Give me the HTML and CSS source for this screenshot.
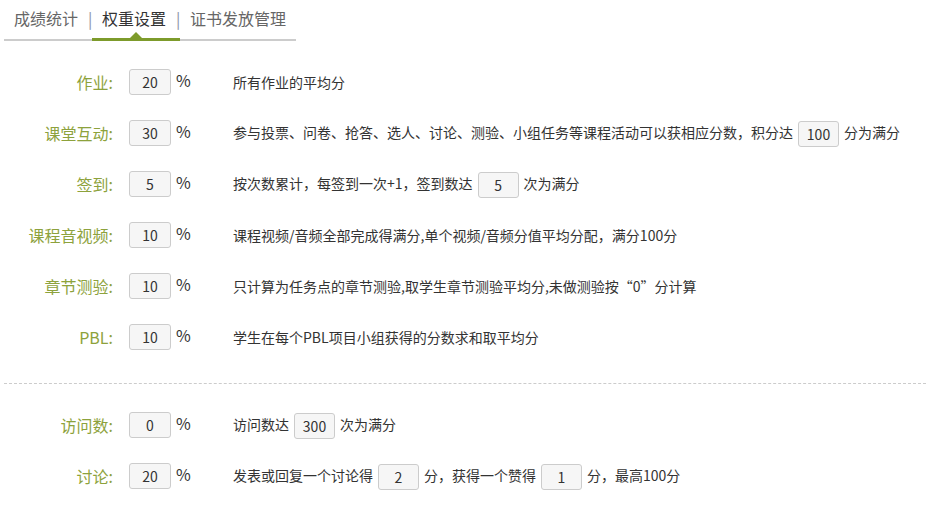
FILE: index.html
```html
<!DOCTYPE html>
<html lang="zh-CN">
<head>
  <meta charset="UTF-8" />
  <title>权重设置</title>
  <link rel="stylesheet" href="styles.css">
</head>
<body>
  <div class="tabs">
    <a class="tab">成绩统计</a>
    <span class="sep">|</span>
    <a class="tab active">权重设置</a>
    <span class="sep">|</span>
    <a class="tab">证书发放管理</a>
  </div>

  <div class="weights">
    <div class="row">
      <label class="name">作业:</label>
      <input class="box" type="text" value="20" />
      <span class="pct">%</span>
      <p class="desc">所有作业的平均分</p>
    </div>
    <div class="row">
      <label class="name">课堂互动:</label>
      <input class="box" type="text" value="30" />
      <span class="pct">%</span>
      <p class="desc">参与投票、问卷、抢答、选人、讨论、测验、小组任务等课程活动可以获相应分数，积分达<input class="box small" type="text" value="100" />分为满分</p>
    </div>
    <div class="row">
      <label class="name">签到:</label>
      <input class="box" type="text" value="5" />
      <span class="pct">%</span>
      <p class="desc">按次数累计，每签到一次+1，签到数达<input class="box small" type="text" value="5" />次为满分</p>
    </div>
    <div class="row">
      <label class="name">课程音视频:</label>
      <input class="box" type="text" value="10" />
      <span class="pct">%</span>
      <p class="desc">课程视频/音频全部完成得满分,单个视频/音频分值平均分配，满分100分</p>
    </div>
    <div class="row">
      <label class="name">章节测验:</label>
      <input class="box" type="text" value="10" />
      <span class="pct">%</span>
      <p class="desc">只计算为任务点的章节测验,取学生章节测验平均分,未做测验按“0”分计算</p>
    </div>
    <div class="row">
      <label class="name">PBL:</label>
      <input class="box" type="text" value="10" />
      <span class="pct">%</span>
      <p class="desc">学生在每个PBL项目小组获得的分数求和取平均分</p>
    </div>
  </div>

  <div class="divider"></div>

  <div class="weights extra">
    <div class="row">
      <label class="name">访问数:</label>
      <input class="box" type="text" value="0" />
      <span class="pct">%</span>
      <p class="desc">访问数达<input class="box small" type="text" value="300" />次为满分</p>
    </div>
    <div class="row">
      <label class="name">讨论:</label>
      <input class="box" type="text" value="20" />
      <span class="pct">%</span>
      <p class="desc">发表或回复一个讨论得<input class="box small" type="text" value="2" />分，获得一个赞得<input class="box small" type="text" value="1" />分，最高100分</p>
    </div>
  </div>
</body>
</html>
```

FILE: styles.css
```css
body {
  margin: 0;
  font-family: "Noto Sans CJK SC", "Noto Sans", sans-serif;
  color: #333;
  background: #fff;
}

.tabs {
  display: flex;
  align-items: flex-start;
  width: 292px;
  height: 39px;
  margin-left: 4px;
  border-bottom: 2px solid #ccc;
  font-size: 16px;
}

.tab {
  position: relative;
  height: 39px;
  padding: 0 10px;
  line-height: 36px;
  color: #666;
  cursor: pointer;
}

.tab.active {
  color: #333;
}

.tab.active::after {
  content: "";
  position: absolute;
  left: 0;
  right: -4px;
  bottom: -2px;
  height: 3px;
  background: #7d9b2b;
}

.tab.active::before {
  content: "";
  position: absolute;
  left: 50%;
  bottom: 1px;
  margin-left: -4px;
  border-left: 6px solid transparent;
  border-right: 6px solid transparent;
  border-bottom: 6px solid #7d9b2b;
}

.sep {
  width: 4px;
  line-height: 36px;
  text-align: center;
  color: #8a93a6;
}

.weights {
  padding-top: 28px;
}

.row {
  display: flex;
  align-items: center;
  height: 26px;
  margin-bottom: 25px;
}

.name {
  width: 113px;
  margin-right: 16px;
  text-align: right;
  font-size: 16px;
  color: #8da23c;
}

.box {
  box-sizing: border-box;
  width: 42px;
  height: 26px;
  border: 1px solid #ccc;
  border-radius: 3px;
  background: #f6f6f6;
  text-align: center;
  font-family: "Noto Sans CJK SC", "Noto Sans", sans-serif;
  font-size: 14px;
  color: #333;
  padding: 0;
}

.box.small {
  width: 41px;
  margin: 0 5px;
  vertical-align: middle;
}

.pct {
  align-self: flex-start;
  width: 57px;
  padding-left: 5px;
  margin-top: 1px;
  font-size: 16px;
  line-height: 20px;
  color: #333;
}

.desc {
  margin: 0;
  font-size: 14px;
  line-height: 26px;
  color: #333;
}

.divider {
  margin: 33px 0 0 4px;
  border-top: 1px dashed #ccc;
}
```
